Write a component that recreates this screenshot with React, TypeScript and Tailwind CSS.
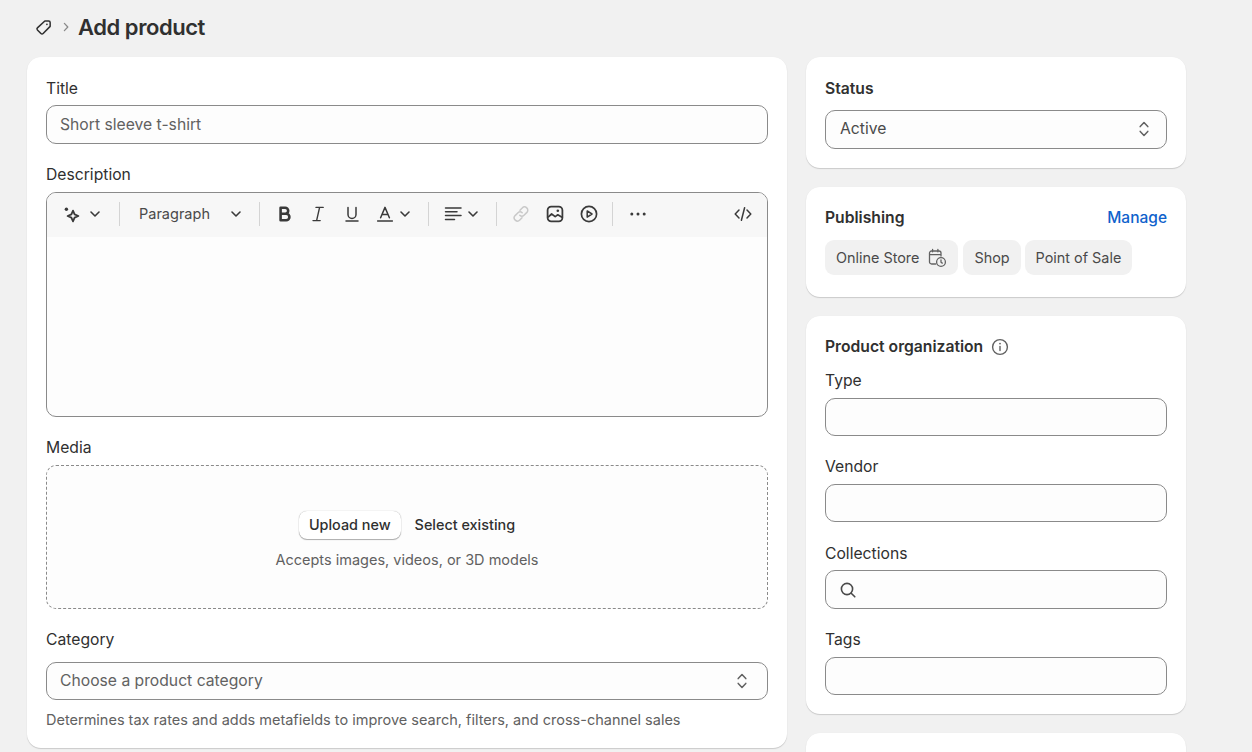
function Chevron({ className = "" }: { className?: string }) {
  return (
    <svg viewBox="0 0 16 16" className={"w-4 h-4 shrink-0 " + className} fill="none" stroke="#3a3a3a" strokeWidth="1.6" strokeLinecap="round" strokeLinejoin="round">
      <path d="M4 6 8 10l4-4" />
    </svg>
  )
}

function Updown() {
  return (
    <svg viewBox="0 0 16 20" className="w-4 h-5 shrink-0" fill="none" stroke="#616161" strokeWidth="1.5" strokeLinecap="round" strokeLinejoin="round">
      <path d="M4.2 7.6 8 3.6l3.8 4" />
      <path d="M4.2 12.4 8 16.4l3.8-4" />
    </svg>
  )
}

function Icon({ children, className = "" }: { children: React.ReactNode; className?: string }) {
  return (
    <svg viewBox="0 0 18 18" className={"w-[18px] h-[18px] shrink-0 " + className} fill="none" stroke="#3a3a3a" strokeWidth="1.6" strokeLinecap="round" strokeLinejoin="round">
      {children}
    </svg>
  )
}

function Divider({ className }: { className: string }) {
  return <div className={"w-px h-6 bg-[#d4d4d4] shrink-0 " + className} />
}

function Label({ children, className = "" }: { children: React.ReactNode; className?: string }) {
  return <div className={"h-5 leading-5 text-[15.7px] text-[#303030] " + className}>{children}</div>
}

function Card({ children, className = "" }: { children: React.ReactNode; className?: string }) {
  return <div className={"bg-white rounded-[14px] shadow-[0_1px_1px_rgba(0,0,0,0.16),0_0_1px_rgba(0,0,0,0.06)] px-[19px] " + className}>{children}</div>
}

function Field({ children, className = "" }: { children?: React.ReactNode; className?: string }) {
  return (
    <div className={"flex items-center bg-[#fdfdfd] border border-[#8a8a8a] rounded-[10px] text-[15.7px] " + className}>
      {children}
    </div>
  )
}

function Chip({ children }: { children: React.ReactNode }) {
  return <div className="h-[35px] flex items-center px-[11px] rounded-[9px] bg-[#f1f1f1] text-[14.4px] text-[#4a4a4a]">{children}</div>
}

function Toolbar() {
  return (
    <div className="h-[44px] flex items-center bg-[#f7f7f7] pl-[15px] pr-[15px] pb-[2px]">
      <Icon>
        <path d="M11 5.6 12.6 9.4 16.4 11 12.6 12.6 11 16.4 9.4 12.6 5.6 11 9.4 9.4z" strokeWidth="1.8" />
        <circle cx="4.4" cy="4.2" r="1.7" fill="#3a3a3a" stroke="none" />
      </Icon>
      <Chevron className="ml-[7px]" />
      <Divider className="ml-4" />
      <span className="ml-[19px] w-[73px] text-[14.5px] text-[#4a4a4a] whitespace-nowrap">Paragraph</span>
      <Chevron className="ml-4" />
      <Divider className="ml-[15px]" />
      <Icon className="ml-4">
        <path d="M4.6 2.8h4.6a3 3 0 0 1 0 6H4.6zM4.6 8.8h5.6a3.2 3.2 0 0 1 0 6.4H4.6z" strokeWidth="2.6" />
      </Icon>
      <Icon className="ml-[15px]">
        <path d="M7 2.4h7.2M4 15.6h7.2M10.6 2.4 7.6 15.6" strokeWidth="1.4" />
      </Icon>
      <Icon className="ml-4">
        <path d="M5 2.4v7a4 4 0 0 0 8 0v-7M3 16h12" strokeWidth="1.5" />
      </Icon>
      <Icon className="ml-[15px]">
        <path d="M4.6 12.8 9 2.4l4.4 10.4M6.2 9.4h5.6M1.6 16h14.8" strokeWidth="1.5" />
      </Icon>
      <Chevron className="ml-[3px]" />
      <Divider className="ml-[15px]" />
      <Icon className="ml-[15px]">
        <path d="M1.5 3h15.5M1.5 6.8h11.5M1.5 10.6h15.5M1.5 14.6h9" strokeWidth="1.5" />
      </Icon>
      <Chevron className="ml-[3px]" />
      <Divider className="ml-[15px]" />
      <svg viewBox="0 0 18 18" className="ml-[15px] w-[18px] h-[18px] shrink-0" fill="none" stroke="#c9c9c9" strokeWidth="1.5" strokeLinecap="round">
        <path d="M8 5.2 10.2 3a3.2 3.2 0 0 1 4.7 4.4l-2.9 2.9a3 3 0 0 1-4.2 0" />
        <path d="M10 12.8 7.8 15a3.2 3.2 0 0 1-4.7-4.4L6 7.7a3 3 0 0 1 4.2 0" />
      </svg>
      <Icon className="ml-4">
        <rect x="1.6" y="1.6" width="14.8" height="14.8" rx="3.6" strokeWidth="1.8" />
        <path d="m2.4 11.8 3.2-2.8 3.6 2.6 2.6-1.8 3.8 2.2" strokeWidth="1.7" />
        <circle cx="11.8" cy="5.8" r="1.3" fill="#3a3a3a" stroke="none" />
      </Icon>
      <Icon className="ml-4">
        <circle cx="9" cy="9" r="7.6" strokeWidth="1.7" />
        <path d="M7.2 5.9 12 9l-4.8 3.1z" strokeWidth="1.5" />
      </Icon>
      <Divider className="ml-[14px]" />
      <svg viewBox="0 0 18 18" className="ml-4 w-[18px] h-[18px] shrink-0" fill="#3a3a3a">
        <circle cx="2.8" cy="9" r="1.5" />
        <circle cx="9" cy="9" r="1.5" />
        <circle cx="15.2" cy="9" r="1.5" />
      </svg>
      <Icon className="ml-auto">
        <path d="M5 5 1.2 9 5 13M13 5l3.8 4-3.8 4M10.6 2.8 7.4 15.2" strokeWidth="1.5" />
      </Icon>
    </div>
  )
}

export default function App() {
  return (
    <div className="h-[752px] overflow-hidden bg-[#f1f1f1] font-['Inter',sans-serif] text-[#303030]">
      <div className="h-[57px] pl-[34px] pb-[3px] flex items-center">
        <svg viewBox="0 0 20 20" className="w-[19px] h-[19px]" fill="none" stroke="#303030" strokeWidth="1.6" strokeLinejoin="round">
          <path d="M11.4 3.2h4a1.6 1.6 0 0 1 1.6 1.6v4L9.6 16.4a1.6 1.6 0 0 1-2.3 0l-3.7-3.8a1.6 1.6 0 0 1 0-2.2z" />
          <circle cx="13.6" cy="6.6" r="0.9" fill="#303030" stroke="none" />
        </svg>
        <svg viewBox="0 0 16 16" className="ml-[5px] w-4 h-4" fill="none" stroke="#8a8a8a" strokeWidth="1.3" strokeLinecap="round" strokeLinejoin="round">
          <path d="m6.4 4.4 3.4 3.6-3.4 3.6" />
        </svg>
        <h1 className="ml-1 text-[22px] font-semibold tracking-[-0.45px] leading-none">Add product</h1>
      </div>

      <div className="pl-[27px] flex items-start gap-[19px]">
        <Card className="w-[760px] h-[691px] pt-[22px]">
          <Label className="mb-[6px]">Title</Label>
          <Field className="h-[39px] px-[13px] pt-px text-[#616161]">Short sleeve t-shirt</Field>

          <Label className="mt-[21px] mb-[7px]">Description</Label>
          <div className="h-[225px] rounded-[10px] border border-[#8a8a8a] bg-[#fdfdfd] overflow-hidden">
            <Toolbar />
          </div>

          <Label className="mt-[21px] mb-[7px]">Media</Label>
          <div className="h-[144px] rounded-[10px] border border-dashed border-[#8a8a8a] bg-[#fdfdfd] flex flex-col items-center pt-[45px]">
            <div className="flex items-center gap-[14px] text-[14.4px] font-medium">
              <div className="h-7 px-[10px] flex items-center rounded-lg bg-white shadow-[0_1px_1px_rgba(0,0,0,0.3),0_0_1px_rgba(0,0,0,0.35)]">Upload new</div>
              <span>Select existing</span>
            </div>
            <div className="mt-[10px] text-[14.5px] text-[#616161]">Accepts images, videos, or 3D models</div>
          </div>

          <Label className="mt-[21px] mb-3">Category</Label>
          <Field className="h-[38px] pl-[13px] pr-[17px] justify-between text-[#616161]">
            Choose a product category
            <Updown />
          </Field>
          <div className="mt-[10px] h-5 leading-5 text-[14.5px] text-[#616161]">Determines tax rates and adds metafields to improve search, filters, and cross-channel sales</div>
        </Card>

        <div className="w-[380px] flex flex-col gap-[19px]">
          <Card className="h-[111px] pt-[22px]">
            <Label className="font-semibold mb-[11px]">Status</Label>
            <Field className="h-[39px] pl-[14px] pr-[14px] pb-[2px] justify-between text-[#4a4a4a]">
              Active
              <Updown />
            </Field>
          </Card>

          <Card className="h-[110px] pt-[21px]">
            <div className="flex items-center justify-between mb-3">
              <Label className="font-semibold">Publishing</Label>
              <a className="leading-5 text-[15.5px] font-medium text-[#0f62cc]">Manage</a>
            </div>
            <div className="flex gap-[5px]">
              <Chip>
                Online Store
                <svg viewBox="0 0 20 20" className="ml-2 w-[20px] h-[20px]" fill="none" stroke="#616161" strokeWidth="1.3" strokeLinecap="round" strokeLinejoin="round">
                  <path d="M8.6 16H4.6A2.1 2.1 0 0 1 2.5 13.9V5.1A2.1 2.1 0 0 1 4.6 3h7.3A2.1 2.1 0 0 1 14 5.1v3M2.5 6.6H14M5.6 1.4v2.4M10.9 1.4v2.4" />
                  <circle cx="14" cy="14" r="4.4" />
                  <path d="M14 11.8v2.4l1.3.9" />
                </svg>
              </Chip>
              <Chip>Shop</Chip>
              <div className="-ml-px">
                <Chip>Point of Sale</Chip>
              </div>
            </div>
          </Card>

          <Card className="h-[398px] pt-[21px]">
            <div className="flex items-center">
              <Label className="font-semibold">Product organization</Label>
              <svg viewBox="0 0 18 18" className="ml-2 w-[18px] h-[18px]" fill="none" stroke="#616161" strokeWidth="1.4" strokeLinecap="round">
                <circle cx="9" cy="9" r="7.4" />
                <path d="M9 8.4v4.2" />
                <circle cx="9" cy="5.6" r="0.9" fill="#616161" stroke="none" />
              </svg>
            </div>
            <Label className="mt-[14px] mb-[7px]">Type</Label>
            <Field className="h-[38px]" />
            <Label className="mt-[21px] mb-[7px]">Vendor</Label>
            <Field className="h-[38px]" />
            <Label className="mt-[22px] mb-[6px]">Collections</Label>
            <Field className="h-[39px] pl-[13px]">
              <svg viewBox="0 0 18 18" className="w-[18px] h-[18px]" fill="none" stroke="#4a4a4a" strokeWidth="1.6" strokeLinecap="round">
                <circle cx="8" cy="8" r="5.6" />
                <path d="m12.2 12.2 3.6 3.6" />
              </svg>
            </Field>
            <Label className="mt-[21px] mb-[7px]">Tags</Label>
            <Field className="h-[38px]" />
          </Card>

          <Card className="h-[100px]" />
        </div>
      </div>
    </div>
  )
}
